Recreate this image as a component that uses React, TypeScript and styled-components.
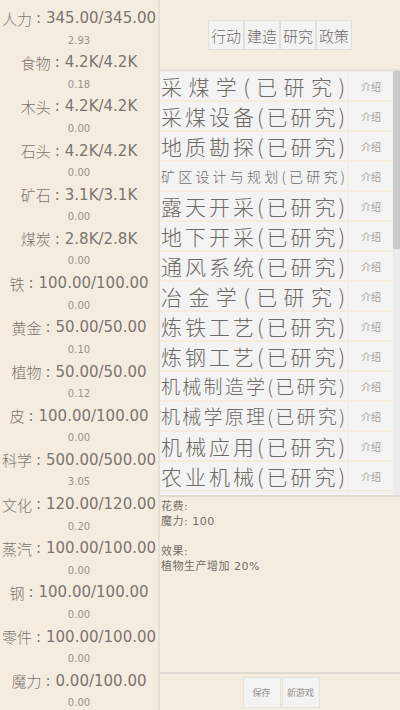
import React from 'react';
import styled, { createGlobalStyle } from 'styled-components';

const GlobalStyle = createGlobalStyle`
  html, body {
    margin: 0;
    padding: 0;
    background: #f5ece0;
  }
  body {
    font-family: "DejaVu Sans", "Noto Sans CJK SC", sans-serif;
    overflow: hidden;
  }
`;

const Page = styled.div`
  display: flex;
  width: 400px;
  height: 710px;
  overflow: hidden;
  background: #f5ece0;
`;

const ResourcePanel = styled.div`
  width: 160px;
  flex-shrink: 0;
  border-right: 2px solid #e4dfd8;
  padding-top: 7px;
  box-sizing: border-box;
  display: flex;
  flex-direction: column;
`;

const Resource = styled.div`
  display: flex;
  flex-direction: column;
  align-items: center;
  height: 44.2px;
  flex-shrink: 0;
`;

const ResourceName = styled.div`
  height: 22px;
  display: flex;
  align-items: center;
  font-size: 15px;
  color: #7a756f;
  white-space: nowrap;
`;

const Label = styled.span`
  font-family: "Noto Sans CJK SC", sans-serif;
  font-weight: 300;
`;

const Colon = styled.span`
  padding: 0 5px 0 4px;
`;

const ResourceRate = styled.div`
  height: 22px;
  display: flex;
  align-items: center;
  font-size: 10px;
  color: #97928c;
`;

const Main = styled.div`
  flex: 1;
  display: flex;
  flex-direction: column;
  height: 710px;
`;

const Toolbar = styled.div`
  height: 71px;
  flex-shrink: 0;
  display: flex;
  justify-content: center;
  align-items: center;
  border-bottom: 2px solid #e4e0da;
  box-sizing: border-box;
  padding-top: 1px;
`;

const Tab = styled.div`
  height: 28px;
  padding: 0 2px;
  display: flex;
  align-items: center;
  background: #f3f3f3;
  border: 1px solid #e2ded8;
  font-size: 15px;
  color: #706b66;
  font-family: "Noto Sans CJK SC", sans-serif;
  font-weight: 300;
`;

const ListArea = styled.div`
  height: 424px;
  flex-shrink: 0;
  display: flex;
  overflow: hidden;
`;

const List = styled.div`
  flex: 1;
  display: flex;
  flex-direction: column;
  gap: 2px;
  padding-top: 1px;
`;

const Row = styled.div`
  display: flex;
  height: 28px;
  flex-shrink: 0;
  gap: 2px;
`;

const NameButton = styled.div<{ $size: number }>`
  width: 187px;
  flex-shrink: 0;
  background: #f3f3f3;
  box-sizing: border-box;
  padding: 0 2px 0 1px;
  font-size: ${({ $size }) => $size}px;
  line-height: 28px;
  color: #6e6a65;
  text-align: justify;
  text-align-last: justify;
  white-space: nowrap;
  overflow: hidden;
  font-family: "Noto Sans CJK SC", sans-serif;
  font-weight: 300;
`;

const InfoButton = styled.div`
  flex: 1;
  background: #f3f3f3;
  display: flex;
  align-items: center;
  justify-content: center;
  font-size: 10px;
  color: #a29e98;
  font-family: "Noto Sans CJK SC", sans-serif;
`;

const ScrollTrack = styled.div`
  width: 7px;
  flex-shrink: 0;
  background: #ececec;
  display: flex;
  flex-direction: column;
`;

const ScrollThumb = styled.div`
  height: 178px;
  background: #cbcbcb;
`;

const Description = styled.div`
  flex: 1;
  border-top: 2px solid #dedad2;
  border-bottom: 2px solid #dedad2;
  padding: 0 0 0 1px;
  display: flex;
  flex-direction: column;
`;

const DescLine = styled.div`
  height: 15px;
  display: flex;
  align-items: center;
  font-size: 11px;
  color: #716c67;
  letter-spacing: 0.5px;
  white-space: nowrap;
`;

const Footer = styled.div`
  height: 36px;
  flex-shrink: 0;
  display: flex;
  justify-content: center;
  align-items: center;
  gap: 1px;
  padding-left: 2px;
`;

const FooterButton = styled.div`
  width: 36px;
  height: 29px;
  display: flex;
  align-items: center;
  justify-content: center;
  background: #f3f3f3;
  border: 1px solid #e6e2dc;
  font-size: 9px;
  color: #96918c;
  font-family: "Noto Sans CJK SC", sans-serif;
`;

const resources = [
  ['人力', '345.00/345.00', '2.93'],
  ['食物', '4.2K/4.2K', '0.18'],
  ['木头', '4.2K/4.2K', '0.00'],
  ['石头', '4.2K/4.2K', '0.00'],
  ['矿石', '3.1K/3.1K', '0.00'],
  ['煤炭', '2.8K/2.8K', '0.00'],
  ['铁', '100.00/100.00', '0.00'],
  ['黄金', '50.00/50.00', '0.10'],
  ['植物', '50.00/50.00', '0.12'],
  ['皮', '100.00/100.00', '0.00'],
  ['科学', '500.00/500.00', '3.05'],
  ['文化', '120.00/120.00', '0.20'],
  ['蒸汽', '100.00/100.00', '0.00'],
  ['钢', '100.00/100.00', '0.00'],
  ['零件', '100.00/100.00', '0.00'],
  ['魔力', '0.00/100.00', '0.00'],
];

const techs = [
  '采煤学',
  '采煤设备',
  '地质勘探',
  '矿区设计与规划',
  '露天开采',
  '地下开采',
  '通风系统',
  '冶金学',
  '炼铁工艺',
  '炼钢工艺',
  '机械制造学',
  '机械学原理',
  '机械应用',
  '农业机械',
  '农业机械化',
];

const sizeFor = (name: string) => {
  if (name.length >= 6) return 14;
  if (name.length === 5) return 19;
  return 21;
};

const tabs = ['行动', '建造', '研究', '政策'];

const description = ['花费:', '魔力: 100', '', '效果:', '植物生产增加 20%'];

export default function App() {
  return (
    <Page>
      <GlobalStyle />
      <ResourcePanel>
        {resources.map(([name, value, rate]) => (
          <Resource key={name}>
            <ResourceName>
              <Label>{name}</Label>
              <Colon>:</Colon>
              {value}
            </ResourceName>
            <ResourceRate>{rate}</ResourceRate>
          </Resource>
        ))}
      </ResourcePanel>
      <Main>
        <Toolbar>
          {tabs.map((t) => (
            <Tab key={t}>{t}</Tab>
          ))}
        </Toolbar>
        <ListArea>
          <List>
            {techs.map((t) => (
              <Row key={t}>
                <NameButton $size={sizeFor(t)}>{t}(已研究)</NameButton>
                <InfoButton>介绍</InfoButton>
              </Row>
            ))}
          </List>
          <ScrollTrack>
            <ScrollThumb />
          </ScrollTrack>
        </ListArea>
        <Description>
          {description.map((line, i) => (
            <DescLine key={i}>{line}</DescLine>
          ))}
        </Description>
        <Footer>
          <FooterButton>保存</FooterButton>
          <FooterButton>新游戏</FooterButton>
        </Footer>
      </Main>
    </Page>
  );
}
